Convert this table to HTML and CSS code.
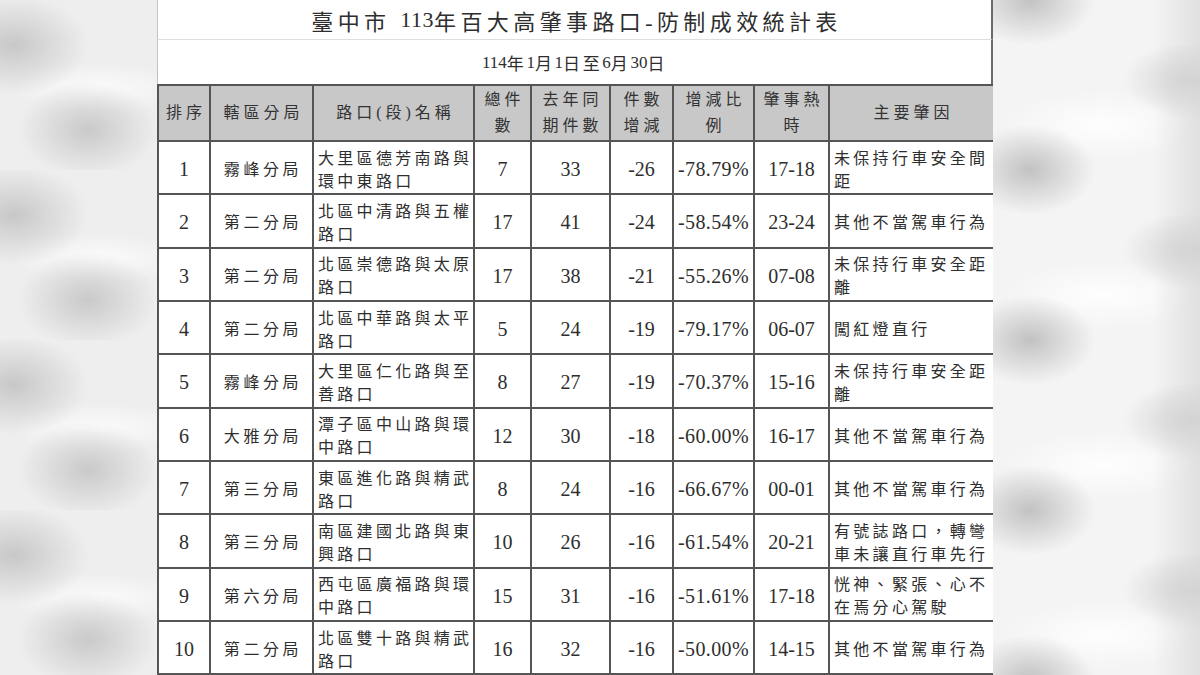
FILE: index.html
```html
<!DOCTYPE html>
<html lang="zh-Hant">
<head>
<meta charset="utf-8">
<title>臺中市 113年百大高肇事路口-防制成效統計表</title>
<link rel="stylesheet" href="styles.css">
</head>
<body>
<div class="bg-left"></div>
<main class="paper">
  <div class="title">臺中市 <span class="num">113</span>年百大高肇事路口-防制成效統計表</div>
  <div class="date"><span class="num">114</span>年<span class="num">1</span>月<span class="num">1</span>日至<span class="num">6</span>月<span class="num">30</span>日</div>
  <table class="stats">
    <colgroup>
      <col class="c1"><col class="c2"><col class="c3"><col class="c4"><col class="c5"><col class="c6"><col class="c7"><col class="c8"><col class="c9">
    </colgroup>
    <thead>
      <tr>
        <th>排序</th>
        <th>轄區分局</th>
        <th>路口(段)名稱</th>
        <th>總件<br>數</th>
        <th>去年同<br>期件數</th>
        <th>件數<br>增減</th>
        <th>增減比<br>例</th>
        <th>肇事熱<br>時</th>
        <th>主要肇因</th>
      </tr>
    </thead>
    <tbody>
      <tr><td>1</td><td class="unit">霧峰分局</td><td class="txt">大里區德芳南路與<br>環中東路口</td><td>7</td><td>33</td><td>-26</td><td class="pct">-78.79%</td><td>17-18</td><td class="txt">未保持行車安全間<br>距</td></tr>
      <tr><td>2</td><td class="unit">第二分局</td><td class="txt">北區中清路與五權<br>路口</td><td>17</td><td>41</td><td>-24</td><td class="pct">-58.54%</td><td>23-24</td><td class="txt">其他不當駕車行為</td></tr>
      <tr><td>3</td><td class="unit">第二分局</td><td class="txt">北區崇德路與太原<br>路口</td><td>17</td><td>38</td><td>-21</td><td class="pct">-55.26%</td><td>07-08</td><td class="txt">未保持行車安全距<br>離</td></tr>
      <tr><td>4</td><td class="unit">第二分局</td><td class="txt">北區中華路與太平<br>路口</td><td>5</td><td>24</td><td>-19</td><td class="pct">-79.17%</td><td>06-07</td><td class="txt">闖紅燈直行</td></tr>
      <tr><td>5</td><td class="unit">霧峰分局</td><td class="txt">大里區仁化路與至<br>善路口</td><td>8</td><td>27</td><td>-19</td><td class="pct">-70.37%</td><td>15-16</td><td class="txt">未保持行車安全距<br>離</td></tr>
      <tr><td>6</td><td class="unit">大雅分局</td><td class="txt">潭子區中山路與環<br>中路口</td><td>12</td><td>30</td><td>-18</td><td class="pct">-60.00%</td><td>16-17</td><td class="txt">其他不當駕車行為</td></tr>
      <tr><td>7</td><td class="unit">第三分局</td><td class="txt">東區進化路與精武<br>路口</td><td>8</td><td>24</td><td>-16</td><td class="pct">-66.67%</td><td>00-01</td><td class="txt">其他不當駕車行為</td></tr>
      <tr><td>8</td><td class="unit">第三分局</td><td class="txt">南區建國北路與東<br>興路口</td><td>10</td><td>26</td><td>-16</td><td class="pct">-61.54%</td><td>20-21</td><td class="txt">有號誌路口，轉彎<br>車未讓直行車先行</td></tr>
      <tr><td>9</td><td class="unit">第六分局</td><td class="txt">西屯區廣福路與環<br>中路口</td><td>15</td><td>31</td><td>-16</td><td class="pct">-51.61%</td><td>17-18</td><td class="txt">恍神、緊張、心不<br>在焉分心駕駛</td></tr>
      <tr><td>10</td><td class="unit">第二分局</td><td class="txt">北區雙十路與精武<br>路口</td><td>16</td><td>32</td><td>-16</td><td class="pct">-50.00%</td><td>14-15</td><td class="txt">其他不當駕車行為</td></tr>
    </tbody>
  </table>
</main>
<div class="bg-right"></div>
</body>
</html>
```
FILE: styles.css
```css
html, body {
  margin: 0;
  padding: 0;
}

body {
  width: 1200px;
  height: 675px;
  overflow: hidden;
  display: flex;
  align-items: flex-start;
  background: #f1f1f1;
  font-family: "Liberation Serif", "Noto Sans CJK TC", serif;
  color: #2e2e2e;
}

.bg-left {
  width: 157px;
  height: 675px;
  flex: none;
  background-color: #eeeeee;
  background-image:
    radial-gradient(ellipse 75px 50px at 14px 45px, rgba(190,190,190,0.8), rgba(190,190,190,0)),
    radial-gradient(ellipse 70px 48px at 88px 130px, rgba(192,192,192,0.8), rgba(192,192,192,0)),
    radial-gradient(ellipse 90px 25px at 100px 88px, rgba(252,252,252,0.9), rgba(252,252,252,0));
  background-size: 157px 170px;
  background-repeat: repeat-y;
}

.bg-right {
  flex: 1;
  height: 675px;
  background-color: #f4f4f4;
  background-image:
    linear-gradient(to right, rgba(255,255,255,0) 0, rgba(255,255,255,0) 160px, rgba(215,215,215,0.7) 207px),
    radial-gradient(ellipse 65px 45px at 37px 125px, rgba(185,185,185,0.85), rgba(185,185,185,0)),
    radial-gradient(ellipse 75px 40px at 205px 35px, rgba(198,198,198,0.85), rgba(198,198,198,0)),
    radial-gradient(ellipse 100px 35px at 110px 80px, rgba(255,255,255,0.9), rgba(255,255,255,0));
  background-size: 207px 675px, 207px 170px, 207px 170px, 207px 170px;
  background-position: 0 0, 0 -125px, 0 -125px, 0 -125px;
  background-repeat: no-repeat, repeat-y, repeat-y, repeat-y;
}

.paper {
  width: 836px;
  height: 675px;
  flex: none;
  background: #ffffff;
  display: flex;
  flex-direction: column;
}

.title {
  flex: none;
  height: 40px;
  box-sizing: border-box;
  border-left: 1px solid #c2c2c2;
  border-right: 2px solid #6a6a6a;
  border-bottom: 1px solid #dedede;
  display: flex;
  align-items: center;
  justify-content: center;
  font-size: 22px;
  letter-spacing: 4.4px;
  padding-left: 4px;
  padding-top: 1px;
  white-space: pre;
}

.title .num {
  letter-spacing: 0.5px;
}

.date {
  flex: none;
  height: 44px;
  box-sizing: border-box;
  border-left: 1px solid #c2c2c2;
  border-right: 2px solid #6a6a6a;
  display: flex;
  align-items: center;
  justify-content: center;
  font-size: 17px;
  letter-spacing: 2.6px;
  padding-top: 1px;
}

.date .num {
  letter-spacing: 0;
}

.stats {
  flex: none;
  width: 836px;
  border-collapse: collapse;
  table-layout: fixed;
}

.c1 { width: 52px; }
.c2 { width: 103px; }
.c3 { width: 161px; }
.c4 { width: 57px; }
.c5 { width: 79px; }
.c6 { width: 63px; }
.c7 { width: 81px; }
.c8 { width: 75px; }
.c9 { width: 165px; }

.stats th,
.stats td {
  border: 2px solid #555555;
  padding: 0;
  text-align: center;
  vertical-align: middle;
  white-space: nowrap;
  overflow: hidden;
}

.stats th {
  background: #c8c8c8;
  height: 54px;
  font-weight: normal;
  font-size: 16px;
  letter-spacing: 4px;
  line-height: 26px;
  padding-left: 4px;
  color: #333333;
}

.stats td {
  height: 47.33px;
  font-size: 20px;
  padding-top: 4px;
  line-height: 23px;
}

.stats td.pct {
  letter-spacing: 0.4px;
}

.stats td.unit {
  font-size: 16px;
  letter-spacing: 3.6px;
  padding-left: 3px;
}

.stats td.txt {
  text-align: left;
  font-size: 16px;
  letter-spacing: 3.3px;
  padding-left: 4px;
  line-height: 23px;
}
```
